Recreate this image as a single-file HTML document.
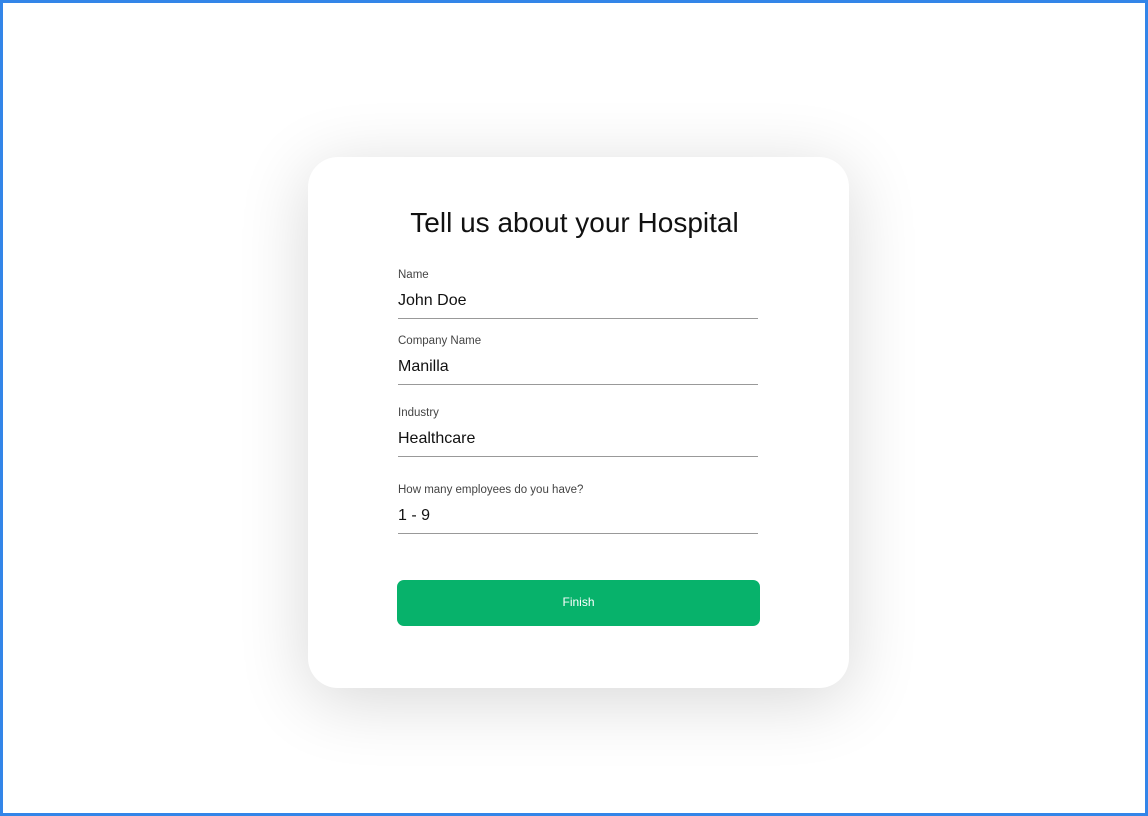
<!DOCTYPE html>
<html><head><meta charset="utf-8"><style>
html,body{margin:0;padding:0}
body{width:1148px;height:816px;box-sizing:border-box;border:3px solid #3385e8;background:#fff;position:relative;overflow:hidden;font-family:"Liberation Sans",sans-serif}
.card{position:absolute;left:305px;top:154px;width:541px;height:531px;background:#fff;border-radius:30px;box-shadow:0 12px 70px rgba(0,0,0,0.16)}
h1{position:absolute;left:0;right:8px;top:50px;margin:0;text-align:center;font-weight:normal;font-size:28px;color:#111}
.f{position:absolute;left:90px;width:360px;border-bottom:1px solid #999}
.f .l{font-size:11.5px;color:#444;position:absolute;top:2px;left:0}
.f .v{font-size:16px;color:#111;position:absolute;left:0}
.btn{position:absolute;left:89px;top:423px;width:363px;height:46px;background:#07b26b;border-radius:7px;color:#fff;font-size:12px;text-align:center;line-height:45px}
</style></head><body>
<div class="card">
<h1>Tell us about your Hospital</h1>
<div class="f" style="top:110px;height:51px"><div class="l">Name</div><div class="v" style="top:25px">John Doe</div></div>
<div class="f" style="top:176px;height:51px"><div class="l">Company Name</div><div class="v" style="top:25px">Manilla</div></div>
<div class="f" style="top:248px;height:51px"><div class="l">Industry</div><div class="v" style="top:25px">Healthcare</div></div>
<div class="f" style="top:325px;height:51px"><div class="l">How many employees do you have?</div><div class="v" style="top:25px">1 - 9</div></div>
<div class="btn">Finish</div>
</div>
</body></html>
